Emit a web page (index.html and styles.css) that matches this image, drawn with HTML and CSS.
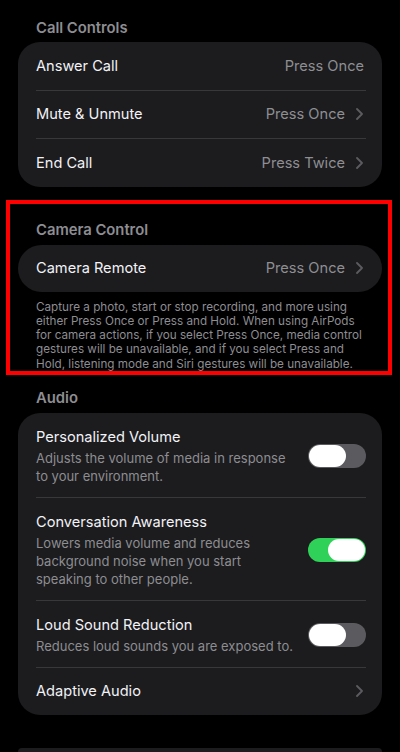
FILE: index.html
```html
<!DOCTYPE html>
<html lang="en">
<head>
    <meta charset="UTF-8">
    <meta name="viewport" content="width=device-width, initial-scale=1.0">
    <title>AirPods Settings</title>
    <link rel="stylesheet" href="styles.css">
</head>
<body>
    <div class="page">
        <div class="section-title first">Call Controls</div>
        <div class="card">
            <div class="row">
                <span class="label">Answer Call</span>
                <span class="value no-chevron">Press Once</span>
            </div>
            <div class="row">
                <span class="label">Mute &amp; Unmute</span>
                <span class="value">Press Once</span>
                <svg class="chevron" width="7" height="12" viewBox="0 0 7 12"><polyline points="1,1 6,6 1,11" /></svg>
            </div>
            <div class="row">
                <span class="label">End Call</span>
                <span class="value">Press Twice</span>
                <svg class="chevron" width="7" height="12" viewBox="0 0 7 12"><polyline points="1,1 6,6 1,11" /></svg>
            </div>
        </div>

        <div class="highlight">
            <div class="section-title">Camera Control</div>
            <div class="card pill">
                <div class="row">
                    <span class="label">Camera Remote</span>
                    <span class="value">Press Once</span>
                    <svg class="chevron" width="7" height="12" viewBox="0 0 7 12"><polyline points="1,1 6,6 1,11" /></svg>
                </div>
            </div>
            <p class="footnote">Capture a photo, start or stop recording, and more using<br>
                either Press Once or Press and Hold. When using AirPods<br>
                for camera actions, if you select Press Once, media control<br>
                gestures will be unavailable, and if you select Press and<br>
                Hold, listening mode and Siri gestures will be unavailable.</p>
        </div>

        <div class="section-title audio">Audio</div>
        <div class="card">
            <div class="row tall">
                <div class="text">
                    <div class="title">Personalized Volume</div>
                    <div class="sub">Adjusts the volume of media in response to your environment.</div>
                </div>
                <div class="toggle"><div class="knob"></div></div>
            </div>
            <div class="row tall">
                <div class="text">
                    <div class="title">Conversation Awareness</div>
                    <div class="sub">Lowers media volume and reduces background noise when you start speaking to other people.</div>
                </div>
                <div class="toggle on"><div class="knob"></div></div>
            </div>
            <div class="row tall">
                <div class="text">
                    <div class="title">Loud Sound Reduction</div>
                    <div class="sub">Reduces loud sounds you are exposed to.</div>
                </div>
                <div class="toggle"><div class="knob"></div></div>
            </div>
            <div class="row">
                <span class="label">Adaptive Audio</span>
                <svg class="chevron" width="7" height="12" viewBox="0 0 7 12"><polyline points="1,1 6,6 1,11" /></svg>
            </div>
        </div>

        <div class="card next"></div>
    </div>
</body>
</html>
```

FILE: styles.css
```css
body {
    margin: 0;
    background: #000;
    font-family: Inter, "Noto Sans", sans-serif;
    color: #fff;
    overflow: hidden;
}
.page {
    padding: 0 18px;
}
.section-title {
    font-size: 14.8px;
    font-weight: 600;
    line-height: 20px;
    color: #8d8d92;
    padding-left: 18px;
    margin-bottom: 5px;
}
.section-title.first {
    margin-top: 18px;
    margin-bottom: 4px;
}
.section-title.audio {
    margin-top: 13px;
}
.card {
    background: #1c1c1e;
    border-radius: 22px;
    padding: 0 16px 0 18px;
}
.card.pill {
    border-radius: 24px;
}
.row {
    display: flex;
    align-items: center;
    height: 47.5px;
    border-bottom: 1px solid #38383a;
}
.row:last-child {
    border-bottom: none;
}
.label {
    font-size: 14.6px;
    line-height: 20px;
    color: #f2f2f7;
    flex: 1;
}
.title {
    font-size: 14.6px;
    line-height: 20px;
    color: #f2f2f7;
}
.value {
    font-size: 14.6px;
    color: #8e8e93;
    margin-right: 11px;
}
.value.no-chevron {
    margin-right: 2px;
}
.chevron {
    fill: none;
    stroke: #5c5c60;
    stroke-width: 1.8;
    stroke-linecap: round;
    stroke-linejoin: round;
    margin-right: 3px;
}
.highlight {
    margin: 13px -10px 0 -12px;
    border: 4px solid #ff0000;
    padding: 16px 6px 0 8px;
    height: 175px;
    box-sizing: border-box;
}
.highlight .card .row {
    height: 47px;
}
.footnote {
    margin: 8px 0 0 18px;
    font-size: 11.7px;
    line-height: 14.3px;
    color: #8d8d92;
    white-space: nowrap;
}
.row.tall {
    height: auto;
    padding: 14px 0 12px;
}
.text {
    flex: 1;
    padding-right: 12px;
}
.sub {
    margin-top: 2px;
    font-size: 13px;
    line-height: 18px;
    color: #8d8d92;
}
.toggle {
    width: 58px;
    height: 24px;
    border-radius: 12px;
    background: #5b5b5f;
    padding: 1px;
    box-sizing: border-box;
    display: flex;
    flex-shrink: 0;
}
.toggle.on {
    background: #30d158;
    justify-content: flex-end;
}
.knob {
    width: 37px;
    height: 22px;
    border-radius: 11px;
    background: #fff;
}
.card.next {
    margin-top: 33px;
    height: 4px;
    border-radius: 22px 22px 0 0;
}
```
